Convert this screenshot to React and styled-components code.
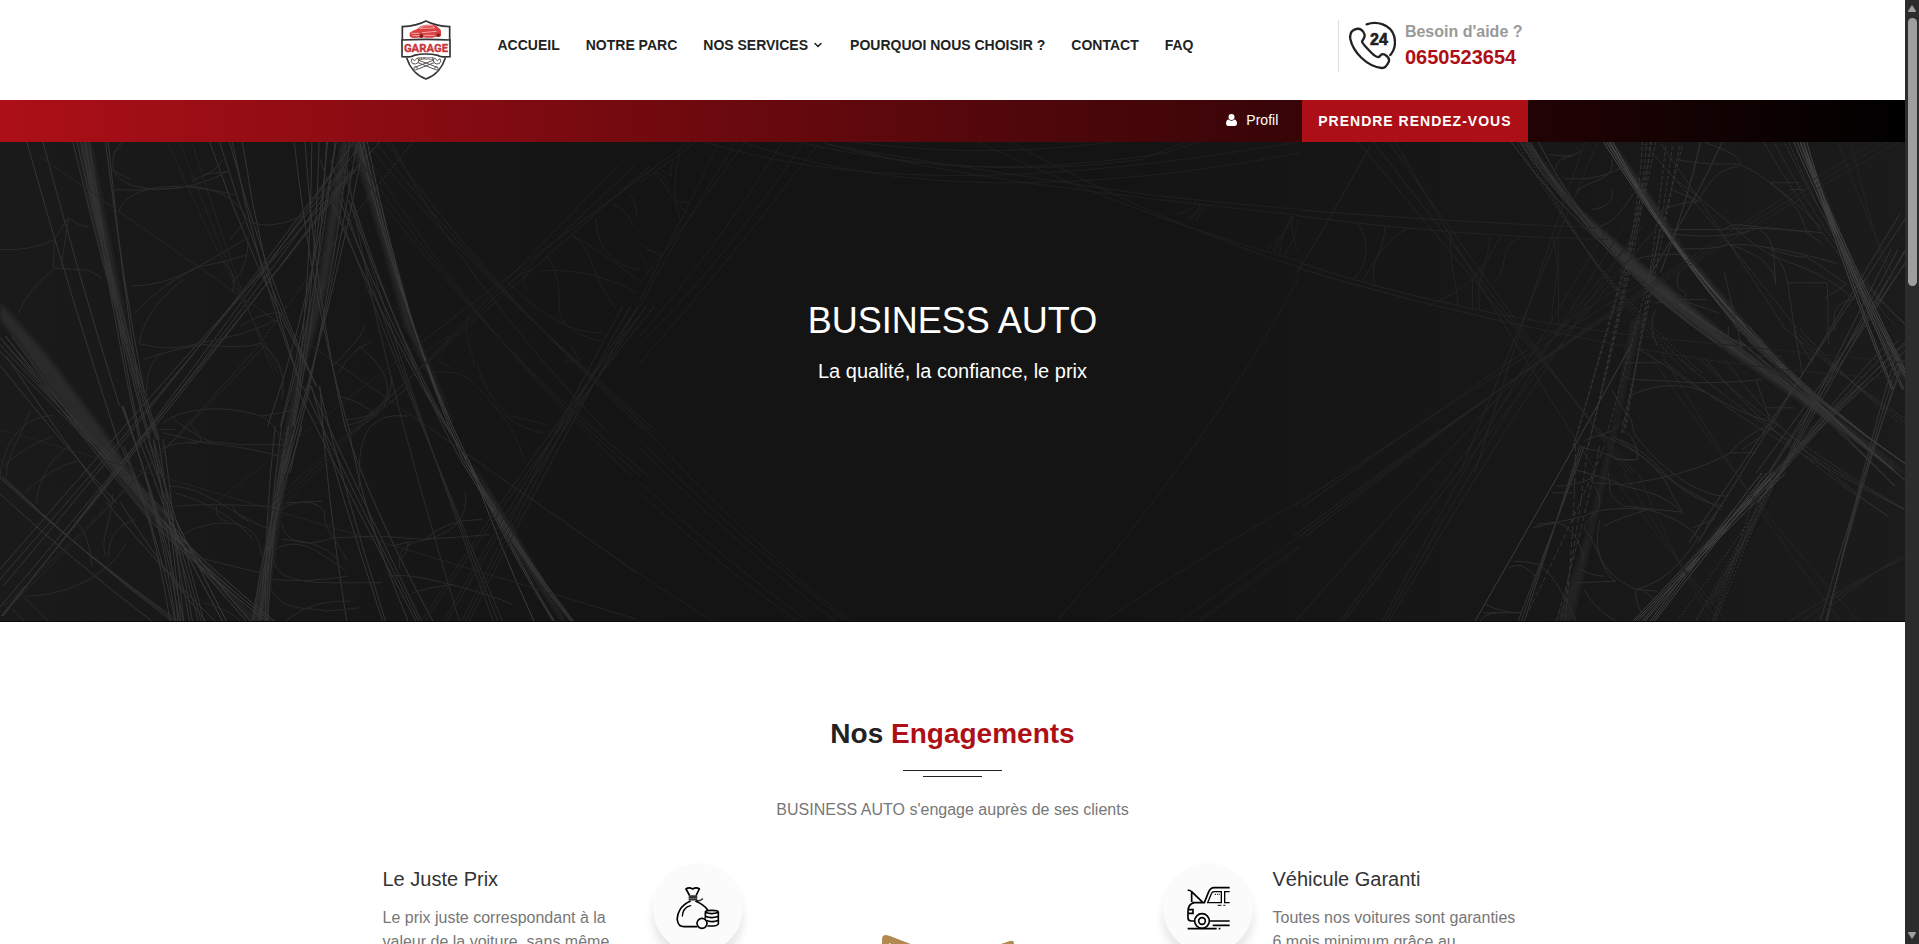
import React from 'react'
import styled, { createGlobalStyle, ThemeProvider } from 'styled-components'
import { FiChevronDown } from 'react-icons/fi'

const theme = {
  colors: {
    red: '#ad0f17',
    dark: '#222222',
    title: '#333333',
    text: '#777777',
    muted: '#999999',
    line: '#dddddd',
    hero: '#141414',
    gold: '#b18a50',
  },
}

const GlobalStyle = createGlobalStyle`
  * {
    box-sizing: border-box;
    margin: 0;
    padding: 0;
  }

  body {
    font-family: "Liberation Sans", Arial, sans-serif;
    font-size: 16px;
    line-height: 24px;
    color: ${theme.colors.text};
    background: #fff;
  }

  a {
    color: inherit;
    text-decoration: none;
  }
`

const Window = styled.div`
  display: flex;
  height: 100vh;
  overflow: hidden;
`

const Page = styled.div`
  flex: 1;
  min-width: 0;
`

const Scrollbar = styled.div`
  width: 14px;
  padding: 5px 2px;
  display: flex;
  flex-direction: column;
  align-items: center;
  background: #2c2c2c;
`

const Thumb = styled.div`
  width: 9px;
  height: 268px;
  margin: 6px 0 auto;
  border-radius: 5px;
  background: #9f9f9f;
`

const Container = styled.div`
  max-width: 1140px;
  margin: 0 auto;
`

const Header = styled.header`
  padding: 20px 0;
  background: #fff;

  ${Container} {
    display: flex;
    align-items: flex-start;
    padding-left: 18px;
  }
`

const LogoLink = styled.a`
  width: 50px;
  height: 60px;

  svg {
    display: block;
  }
`

const NavList = styled.ul`
  display: flex;
  gap: 26px;
  margin-left: 47px;
  list-style-type: none;
`

const NavLink = styled.a`
  display: flex;
  align-items: center;
  gap: 4px;
  font-size: 14px;
  font-weight: bold;
  line-height: 50px;
  text-transform: uppercase;
  white-space: nowrap;
  color: ${({ theme }) => theme.colors.dark};

  svg {
    stroke-width: 3;
  }
`

const Help = styled.div`
  display: flex;
  gap: 9px;
  height: 52px;
  margin-left: auto;
  padding-left: 10px;
  border-left: 1px solid ${({ theme }) => theme.colors.line};
`

const HelpText = styled.div`
  font-weight: bold;
  white-space: nowrap;
  color: ${({ theme }) => theme.colors.muted};

  a {
    display: block;
    font-size: 20px;
    line-height: 26px;
    color: ${({ theme }) => theme.colors.red};
  }
`

const TopBar = styled.div`
  background: linear-gradient(to right, ${({ theme }) => theme.colors.red}, #000);

  ${Container} {
    display: flex;
    justify-content: flex-end;
    gap: 24px;
    max-width: 1150px;
  }
`

const ProfileLink = styled.a`
  display: flex;
  align-items: center;
  gap: 9px;
  font-size: 14px;
  line-height: 40px;
  height: 40px;
  color: #fff;
`

const BookButton = styled.button`
  height: 42px;
  padding: 0 16px;
  border: none;
  font-family: inherit;
  font-size: 14px;
  font-weight: bold;
  letter-spacing: 1px;
  text-transform: uppercase;
  color: #fff;
  background: ${({ theme }) => theme.colors.red};
  cursor: pointer;
`

const HeroSection = styled.section`
  position: relative;
  padding: 155px 0 236px;
  overflow: hidden;
  text-align: center;
  color: #fff;
  background: linear-gradient(to right, #1a1a1a, ${({ theme }) => theme.colors.hero} 35%, ${({ theme }) => theme.colors.hero} 60%, #1b1b1b);
  border-bottom: 1px solid #100a0e;
`

const WebDrawing = styled.svg`
  position: absolute;
  inset: 0;
  width: 100%;
  height: 100%;

  path {
    vector-effect: non-scaling-stroke;
  }
`

const HeroContent = styled.div`
  position: relative;

  h1 {
    font-size: 36px;
    font-weight: normal;
    line-height: 48px;
  }

  p {
    margin-top: 12px;
    font-size: 20px;
    line-height: 28px;
  }
`

const Engagements = styled.section`
  padding-top: 92px;
`

const SectionTitle = styled.h2`
  font-size: 28px;
  line-height: 40px;
  text-align: center;
  color: ${({ theme }) => theme.colors.dark};

  span {
    color: ${({ theme }) => theme.colors.red};
  }
`

const Divider = styled.div`
  display: flex;
  flex-direction: column;
  align-items: center;
  gap: 5px;
  margin: 16px 0 21px;

  &::before,
  &::after {
    content: "";
    width: 99px;
    height: 1px;
    background: ${({ theme }) => theme.colors.dark};
  }

  &::after {
    width: 59px;
  }
`

const SectionText = styled.p`
  text-align: center;
`

const Columns = styled.div`
  display: grid;
  grid-template-columns: repeat(3, 1fr);
  gap: 30px;
  margin-top: 41px;
`

const Feature = styled.article`
  display: flex;
  flex-direction: ${({ $reverse }) => ($reverse ? 'row-reverse' : 'row')};
  justify-content: space-between;
  align-items: flex-start;
  gap: 20px;

  > div {
    flex: 1;
  }

  h3 {
    font-size: 20px;
    font-weight: normal;
    line-height: 32px;
    margin-bottom: 11px;
    color: ${({ theme }) => theme.colors.title};
  }
`

const IconCircle = styled.span`
  display: flex;
  align-items: center;
  justify-content: center;
  width: 90px;
  height: 90px;
  border-radius: 50%;
  background: #fbfbfb;
  box-shadow: 0 10px 10px rgba(0, 0, 0, 0.1);
`

const CenterArt = styled.svg`
  display: block;
  width: 140px;
  height: 60px;
  margin: 71px auto 0 109px;
`

const Logo = () => (
  <svg width="50" height="60" viewBox="3 0 150 180" role="img" aria-label="Garage service">
    <path d="M7 62V20Q50 18 78 3Q106 18 149 20V62" fill="#fff" stroke="#333" strokeWidth="5" />
    <path d="M20 114C28 140 48 166 78 177C108 166 128 140 136 114" fill="#fff" stroke="#333" strokeWidth="5" />
    <path d="M29 38Q40 30 52 27Q62 15 78 14L100 14Q112 16 116 24Q124 28 123 38V48Q118 53 108 50Q90 56 70 52L44 54Q32 54 29 48Z" fill="#d9403f" />
    <path d="M58 25Q66 17 80 17H98L104 24ZM34 40H58M66 38L110 34M38 47H60M70 46H104" fill="none" stroke="#f5c1bd" strokeWidth="2.5" />
    <circle cx="64" cy="48" r="6" fill="#7c2020" />
    <circle cx="115" cy="45" r="5" fill="#7c2020" />
    <path d="M6 60Q78 56 150 60V110Q120 112 114 106Q78 98 42 106Q36 112 6 110Z" fill="#fff" stroke="#333" strokeWidth="5" />
    <text x="78" y="97" textAnchor="middle" fill="#c9373a" stroke="#c9373a" strokeWidth="1" fontFamily="Roboto, 'Liberation Sans', sans-serif" fontWeight="bold" fontSize="34">GARAGE</text>
    <text x="78" y="119" textAnchor="middle" fill="#333" fontFamily="'Liberation Sans', sans-serif" fontWeight="bold" fontSize="11">SERVICE</text>
    <g fill="none" stroke="#555" strokeWidth="3">
      <path d="M36 116Q30 124 38 131Q48 134 54 128L104 148M54 120L112 142M36 116L44 122L52 114Q60 120 54 128" />
      <path d="M120 116Q126 124 118 131Q108 134 102 128L52 148M102 120L44 142M120 116L112 122L104 114Q96 120 102 128" />
      <circle cx="47" cy="145" r="5" />
      <circle cx="109" cy="145" r="5" />
    </g>
  </svg>
)

const PhoneIcon = () => (
  <svg width="47" height="50" viewBox="42 29 141 150" fill="none" stroke="#222" strokeWidth="7" strokeLinecap="round" strokeLinejoin="round">
    <path d="M95 42C125 31 166 42 177 76C183 98 178 120 166 134" />
    <path d="M60 57C49 61 44 72 46 86C54 125 95 168 140 173C150 174 156 166 161 155C166 144 158 138 150 133C140 129 138 133 133 139C128 142 120 138 110 128C98 116 84 100 81 94C82 88 90 84 89 74C87 63 76 51 60 57Z" />
    <text x="105" y="104" fill="#222" strokeWidth="2" fontFamily="'Liberation Sans', sans-serif" fontWeight="bold" fontSize="48">24</text>
  </svg>
)

const UserIcon = () => (
  <svg width="11" height="12" viewBox="0 0 11 12" fill="#fff">
    <circle cx="5.5" cy="3" r="3" />
    <path d="M0 9.6C0 7 1 5.5 2.7 5.4Q5.5 8 8.3 5.4C10 5.5 11 7 11 9.6Q11 12 9 12H2Q0 12 0 9.6Z" />
  </svg>
)

const MoneyBagIcon = () => (
  <svg width="44" height="44" viewBox="948 138 132 132" fill="none" stroke="#000" strokeWidth="5" strokeLinejoin="round" strokeLinecap="round">
    <path d="M988 165L978 147Q987 140 998 147Q1009 140 1018 147L1009 165" />
    <path d="M988 168H1010M988 173H1010M988 179H1010M1010 182Q1020 184 1027 177" stroke="#333" />
    <path d="M990 184C962 196 950 222 952 240C954 256 962 260 972 260H1010" />
    <path d="M1008 184C1022 190 1036 200 1043 210" />
    <path d="M967 228C968 212 978 200 992 197" strokeWidth="4" />
    <circle cx="1026" cy="250" r="15" />
    <path d="M1036 234V216Q1037 211 1055 211Q1074 211 1075 216V252Q1072 259 1044 258M1036 217Q1055 225 1075 217M1036 229Q1055 237 1075 229M1042 242Q1060 248 1075 241" />
  </svg>
)

const CarIcon = () => (
  <svg width="44" height="44" viewBox="136 138 132 132" fill="none" stroke="#000" strokeWidth="5">
    <path d="M141 151Q149 150 153 155L187 188M153 155V186M156 188H191L203 158Q208 143 221 143H267" />
    <path d="M160 188Q142 192 142 215V234Q142 243 152 243H160M142 209H157V220H142" />
    <path d="M201 188L212 161Q214 155 221 155H242V188ZM267 155H252V188H267" strokeWidth="4" />
    <path d="M222 163H238" strokeWidth="3" strokeDasharray="4 3" />
    <path d="M231 196H242M248 196H254" strokeWidth="3" />
    <circle cx="184" cy="243" r="22" />
    <circle cx="184" cy="243" r="10" />
    <path d="M208 243H267M216 256H267M141 266H228M234 266H239" />
  </svg>
)

// draws n threads that follow one curve, each a bit further from it
// p: start x, y, control x, y, end x, y
const Strands = ({ p, n = 5, a = 30, b = 30, color = '#343434', dash }) => {
  const lines = []
  for (let i = 0; i < n; i++) {
    const t = n > 1 ? i / (n - 1) - 0.5 : 0
    const w = ((i * 7) % 5) / 5 - 0.4
    const s = (t + w * 0.25) * a
    const e = (w * 0.6 - t) * b
    lines.push(`M${p[0] + s} ${p[1]}Q${p[2] + (s + e) / 2} ${p[3]} ${p[4] + e} ${p[5]}`)
  }
  return <path d={lines.join('')} stroke={color} strokeDasharray={dash} />
}

const leftThreads = [
  { p: [68, 6, 180, 480, 300, 920], n: 1 },
  { p: [300, 920, 380, 1140, 425, 1446], n: 2, a: 6, b: 16 },
  { p: [108, 6, 200, 420, 300, 800], n: 1 },
  { p: [300, 800, 400, 1140, 440, 1446], n: 3, a: 4, b: 36 },
  { p: [200, 6, 290, 560, 370, 900], n: 7, a: 36, b: 50 },
  { p: [370, 900, 420, 1120, 468, 1446], n: 8, a: 50, b: 70 },
  { p: [262, 6, 300, 420, 350, 760], n: 2, a: 6, b: 14 },
  { p: [0, 590, 200, 880, 400, 1140], n: 7, a: 60, b: 60 },
  { p: [400, 1140, 520, 1320, 620, 1446], n: 7, a: 60, b: 130, color: '#3c3c3c' },
  { p: [0, 650, 150, 900, 280, 1090], n: 2, a: 30, b: 20 },
  { p: [280, 1090, 400, 1290, 520, 1446], n: 2, a: 30, b: 30 },
  { p: [935, 6, 520, 560, 0, 1300], n: 1 },
  { p: [880, 6, 520, 600, 0, 1340], n: 2, a: 20, b: 30 },
  { p: [850, 90, 520, 650, 0, 1430], n: 4, a: 50, b: 30 },
  { p: [640, 620, 400, 950, 20, 1400], n: 2, a: 14, b: 20, color: '#272727' },
  { p: [1016, 6, 860, 240, 640, 620], n: 1, dash: '2 2' },
  { p: [0, 1010, 200, 1240, 430, 1446], n: 3, a: 10, b: 30 },
  { p: [0, 1060, 180, 1260, 380, 1446], n: 1 },
  { p: [555, 6, 630, 380, 760, 740], n: 5, a: 70, b: 60 },
  { p: [760, 740, 850, 1060, 975, 1446], n: 6, a: 60, b: 170 },
  { p: [735, 6, 770, 480, 850, 860], n: 2, a: 24, b: 10 },
  { p: [850, 860, 900, 1100, 1040, 1446], n: 2, a: 8, b: 80 },
  { p: [800, 6, 770, 500, 700, 860], n: 6, a: 60, b: 60 },
  { p: [710, 860, 660, 1150, 640, 1446], n: 7, a: 60, b: 40 },
  { p: [875, 6, 810, 520, 700, 1000], n: 3, a: 30, b: 40 },
  { p: [820, 60, 930, 560, 1200, 1446], n: 4, a: 60, b: 120, color: '#2b2b2b' },
  { p: [840, 180, 980, 640, 1140, 960], n: 4, a: 50, b: 20 },
  { p: [890, 6, 990, 560, 1140, 960], n: 3, a: 16, b: 26, color: '#3c3c3c' },
  { p: [1140, 960, 1260, 1240, 1375, 1446], n: 6, a: 20, b: 90, color: '#3c3c3c' },
  { p: [930, 6, 1150, 400, 1568, 870], n: 4, a: 60, b: 140, color: '#222' },
  { p: [880, 60, 1180, 600, 1568, 1010], n: 3, a: 40, b: 80, color: '#202020' },
  { p: [1568, 80, 1180, 500, 640, 1100], n: 4, a: 90, b: 200, color: '#212121' },
  { p: [1568, 500, 1350, 900, 1100, 1446], n: 7, a: 70, b: 120, color: '#232323' },
  { p: [440, 6, 560, 400, 680, 700], n: 3, a: 50, b: 40, color: '#232323' },
  { p: [100, 50, 700, 560, 1568, 1300], n: 1, color: '#262626' },
  { p: [0, 870, 600, 1080, 1568, 1440], n: 1, color: '#232323' },
]

const leftWebs = `M0 330Q80 335 133 300L168 235Q190 258 217 263M133 300Q132 340 131 385M168 235L150 380M45 520Q70 450 135 385Q170 390 215 392L250 415
M300 6C260 60 270 120 330 140C430 170 520 120 560 95M280 150C360 155 440 145 460 140C540 145 590 190 605 240C640 270 700 255 745 225
M290 220C300 170 350 140 440 140M270 90L320 120M275 40L300 20M500 105L560 95M460 142Q520 150 575 165M545 60Q540 90 470 125
M320 440Q400 440 480 385Q560 330 608 295M330 520Q400 430 490 380Q550 370 605 345M340 610Q360 500 450 420M550 370Q580 400 570 460M565 300Q590 260 600 245M608 295Q610 380 570 430
M340 612Q420 640 490 610Q600 590 680 540M350 660Q420 630 500 615Q600 630 640 610M640 615C690 650 700 720 690 780M360 770C355 690 380 650 400 640M590 560Q640 520 680 520
M400 850C440 810 540 790 640 830L730 810M460 840C480 880 520 920 460 910M390 930C440 900 520 905 580 915H700M640 830C680 860 680 890 700 915M400 880L500 910Q620 925 700 955M420 830Q450 870 520 910M380 870H430
M415 1040C500 1040 560 1120 660 1170M430 1100C520 1090 600 1100 680 1100M530 1100Q525 1140 560 1146M440 1190C520 1130 640 1130 640 1250M430 1060Q560 1110 620 1200M570 1100Q580 1130 610 1146M440 1240Q600 1290 640 1300
M690 1110C720 1080 780 1080 795 1120C790 1160 820 1200 850 1260M690 1150C700 1220 760 1220 815 1195L920 1190M675 1230C740 1180 800 1260 845 1290M670 1260C680 1330 760 1330 850 1330H935M660 1320Q760 1330 850 1310M690 1200Q780 1200 830 1260M700 1090L790 1085
M895 560C880 600 840 650 815 680M905 610Q860 630 830 700M880 620C940 680 950 720 950 760C930 830 880 840 845 840M825 770C870 780 900 800 920 830M840 860C900 850 960 790 1000 740M1000 830C920 820 880 860 880 1000V1050M850 890L930 820M960 710Q960 760 940 800
M1140 1060C1150 1150 1090 1190 1040 1200Q980 1195 930 1190M980 1290C970 1220 1000 1200 1100 1195Q1160 1190 1200 1185M950 1310C1010 1300 1080 1330 1120 1340C1180 1360 1230 1380 1255 1395M1010 1360Q1060 1340 1110 1335M960 1220L1010 1205M980 1260Q1000 1240 1000 1210M1180 1140Q1090 1140 1040 1200
M0 1010C10 900 60 830 130 828M75 810C50 900 20 930 15 1010M130 890Q60 920 10 980M60 1060Q130 980 190 965M90 1095C90 1020 130 950 170 920M275 1060C280 1130 240 1200 260 1250M330 1140C260 1170 270 1230 265 1250M60 1370C150 1370 260 1320 310 1210M30 1410L60 1446M55 1370L120 1446M225 1280Q220 1180 180 1140
M500 1390Q560 1410 590 1446M660 1340C690 1420 740 1400 800 1415Q850 1410 880 1405M700 1446Q760 1380 860 1385`

const leftFaintWebs = `M1040 640Q1080 600 1100 590C1080 680 1050 650 1110 690M1145 530C1130 600 1170 660 1160 680M1060 700Q1120 690 1150 720C1220 800 1240 860 1330 880M1170 680Q1190 770 1250 830L1340 855M1245 430Q1280 400 1300 390C1260 440 1300 440 1290 450M1340 350C1400 460 1340 520 1400 570Q1440 600 1480 605M1245 430Q1320 520 1370 545Q1410 580 1480 580M1320 395C1420 385 1500 420 1560 460M1400 290C1460 330 1440 400 1510 510M1405 290Q1480 340 1560 420M1460 235C1460 320 1500 380 1568 390M1500 195Q1540 210 1550 260M1540 160Q1560 190 1560 230M1210 800Q1270 880 1285 970M1380 665H1420L1400 620`

const rightThreads = [
  { p: [570, 6, 760, 370, 1100, 620], n: 5, a: 60, b: 90, color: '#363636' },
  { p: [560, 6, 740, 420, 1000, 700], n: 3, a: 20, b: 70, dash: '2 2' },
  { p: [1000, 660, 1200, 900, 1533, 1130], n: 5, a: 140, b: 120, dash: '2 1' },
  { p: [1100, 600, 1290, 780, 1533, 1040], n: 5, a: 60, b: 70 },
  { p: [780, 6, 940, 330, 1120, 560], n: 5, a: 20, b: 30, color: '#464646' },
  { p: [1120, 560, 1300, 790, 1533, 990], n: 5, a: 30, b: 80, color: '#3c3c3c' },
  { p: [890, 6, 1050, 240, 1250, 570], n: 2, a: 40, b: 40, dash: '2 1' },
  { p: [1250, 570, 1380, 720, 1533, 850], n: 3, a: 30, b: 60, dash: '2 1' },
  { p: [1268, 6, 1370, 330, 1533, 750], n: 7, a: 30, b: 60, color: '#424242' },
  { p: [1210, 6, 1380, 400, 1533, 560], n: 4, a: 60, b: 40, dash: '2 1' },
  { p: [885, 6, 860, 280, 715, 920], n: 5, a: 30, b: 60, dash: '4 2' },
  { p: [950, 20, 900, 380, 810, 880], n: 4, a: 40, b: 50, dash: '4 2' },
  { p: [715, 920, 640, 1180, 560, 1446], n: 3, a: 10, b: 30 },
  { p: [740, 920, 700, 1180, 640, 1446], n: 4, a: 70, b: 120, dash: '5 3' },
  { p: [840, 620, 640, 1050, 450, 1446], n: 1, color: '#3c3c3c' },
  { p: [1533, 330, 1330, 740, 1200, 1000], n: 6, a: 60, b: 60 },
  { p: [1533, 600, 1300, 860, 1150, 1090], n: 5, a: 60, b: 40 },
  { p: [1200, 1000, 1040, 1210, 870, 1446], n: 8, a: 50, b: 60, color: '#404040' },
  { p: [1200, 1000, 1110, 1240, 1020, 1446], n: 6, a: 50, b: 90, dash: '2 2' },
  { p: [1533, 220, 1280, 700, 1000, 1210], n: 2, a: 20, b: 30 },
  { p: [1520, 660, 1420, 1020, 1330, 1446], n: 4, a: 24, b: 20 },
  { p: [1045, 6, 990, 200, 905, 400], n: 2, a: 50, b: 30 },
  { p: [200, 6, 460, 430, 820, 1000], n: 4, a: 90, b: 110, color: '#242424' },
  { p: [820, 1000, 920, 1200, 1060, 1446], n: 3, a: 60, b: 80, color: '#232323' },
  { p: [900, 640, 1150, 1100, 1400, 1446], n: 2, a: 30, b: 60, color: '#242424' },
  { p: [1490, 6, 760, 500, 0, 1190], n: 3, a: 50, b: 60, color: '#242424' },
  { p: [860, 420, 420, 760, 0, 1100], n: 2, a: 40, b: 30, color: '#222' },
  { p: [860, 260, 480, 860, 150, 1446], n: 6, a: 130, b: 220, color: '#232323' },
  { p: [740, 6, 560, 560, 430, 1000], n: 2, a: 30, b: 50, color: '#242424' },
  { p: [180, 20, 80, 240, 0, 400], n: 1, color: '#242424' },
  { p: [1380, 6, 1430, 200, 1500, 420], n: 2, a: 30, b: 20, color: '#242424' },
  { p: [1533, 1250, 1400, 1330, 1270, 1446], n: 3, a: 20, b: 120, color: '#262626' },
]

const rightWebs = `M0 212Q360 245 750 265M0 230Q380 290 780 300M0 370Q380 520 860 590L1533 670M0 388Q400 530 870 630Q1200 700 1533 720
M145 250C180 310 170 370 140 415M215 260C215 330 180 380 160 420M275 265C180 330 180 400 190 430M380 280C380 400 400 440 400 500M480 290C480 370 450 430 350 485M510 290C450 400 450 430 455 510M560 295C500 310 530 400 490 430M640 300C670 400 630 480 640 545M437 420V505M655 300V550`

const rightBrightWebs = `M630 45Q660 50 690 50M700 25C740 50 640 40 650 90M670 118H720Q780 110 820 80M700 160C720 120 800 130 790 60M740 210Q800 200 790 150M760 260C820 240 830 160 870 140
M955 60C1040 80 1070 70 1115 75C1180 110 1250 180 1320 265M1020 6C1100 40 1120 60 1115 75M950 120C1060 210 1140 320 1200 350S1330 400 1405 480M1010 180C1040 120 1060 90 1110 80M940 150L1010 185Q950 190 915 215M1190 130H1265M1240 150H1280M1190 130C1270 200 1270 240 1285 280L1320 310
M930 270H1070Q1160 260 1325 280M1070 270L1100 255Q1200 265 1290 278M950 285Q1100 300 1160 265Q1200 300 1200 350L1205 435M965 328Q1060 330 1085 315Q1180 310 1360 372M1085 315C1160 340 1200 380 1205 430M1200 345Q1230 380 1235 430H1335M1170 320C1220 340 1270 360 1280 350Q1320 380 1385 435M1235 430Q1250 560 1272 700M1335 430C1340 520 1335 600 1340 615M1385 435L1330 475M1400 480Q1340 490 1355 575M1075 400C1090 480 1110 560 1120 640M1250 575Q1280 640 1300 670
M850 360Q900 340 965 345M960 400C940 470 990 440 975 485L1060 520M900 490Q960 480 980 500M950 480H1030M900 510Q880 560 905 620M1160 650H1220M1085 560V600H1060
M820 670H915M815 700Q820 720 850 720Q940 725 1000 730Q1100 730 1170 720M835 770C900 730 980 730 1030 760C1100 810 1160 840 1210 850M860 630C960 700 990 740 1030 760M790 750C820 830 840 810 845 880C900 970 1000 1070 1080 1070M1155 720L1190 840M1180 805H1250M1200 850Q1120 890 1090 940H1155M1090 940C1000 1000 900 1020 820 1035L740 1030M1120 930L1210 855M820 840C790 890 760 880 720 905
M715 925Q770 935 800 960H850M790 890C900 960 960 1080 1070 1100M760 885C900 950 930 1030 940 1060L970 1120M810 900Q870 930 930 1010C980 1060 1020 1070 1065 1110M690 990Q770 1010 820 1040Q920 1060 965 1115M650 1040Q700 1040 750 1010M640 1060H700M780 1000C790 1050 770 1060 820 1100Q900 1110 970 1118M745 1040C800 1130 680 1140 735 1190M600 1155Q660 1150 720 1130Q760 1100 880 1110C940 1130 990 1160 1010 1200M590 1165Q620 1155 650 1150C690 1160 710 1210 720 1260M770 1160Q800 1140 880 1110M760 1140C740 1230 760 1300 850 1350L905 1355M735 1190C760 1240 770 1310 800 1325M700 1330L800 1325M850 1350C920 1330 970 1270 1010 1190M850 1350Q850 1400 870 1425M870 1355L900 1380M540 1265Q570 1265 605 1275C650 1310 680 1400 700 1446M530 1285Q560 1260 600 1315M710 1290Q740 1310 770 1310M470 1395Q510 1420 560 1420H465M455 1446Q470 1420 500 1420M720 1350Q740 1400 800 1446M1025 1180Q1030 1150 1060 1110M995 1165L1050 1140M830 880Q860 920 855 960Q800 970 785 940`

const centerWebs = `M150 6C420 110 820 170 1568 6M240 6C500 120 900 200 1568 40M370 6C620 80 900 110 1190 60L1300 6M430 6C650 100 950 100 1250 40L1330 6M440 15C650 60 860 100 1040 135S1300 180 1568 210M500 25C700 100 1000 150 1568 228M800 6C1060 160 1300 270 1568 365M880 6C1100 160 1320 280 1568 385M500 6C700 40 900 45 1130 6M0 115L120 6M0 130L135 6
M190 6Q100 240 0 480M230 6Q100 260 0 500M340 6Q180 330 0 590M390 6Q180 400 0 610M425 10Q230 340 0 670M250 6Q120 240 0 430M95 40C85 80 80 150 85 185L120 190M80 60Q70 100 75 110M30 100C70 130 60 180 125 230M50 90L75 110M35 100Q60 100 65 140M85 185L95 240M0 310Q40 350 50 350M15 330L52 342M0 340L20 395
M0 850Q230 1180 500 1446M0 905Q240 1200 490 1446M0 925Q240 1230 465 1446M0 1030Q200 1260 400 1446M0 1060Q200 1290 375 1446M0 1305Q90 1380 175 1446
M1568 410Q1360 900 990 1446M1568 1085Q1320 1260 1100 1446M1568 1190Q1420 1320 1280 1446M1568 1220Q1450 1320 1325 1446M1568 1226L1330 1446
M1275 225Q1320 210 1320 185M1295 240Q1330 220 1330 190M1305 245L1342 190M1320 245Q1330 210 1360 190M1488 330Q1540 280 1550 230M1505 338L1548 230M1520 345Q1520 290 1550 230M1530 345Q1560 300 1565 240M1550 230Q1545 300 1568 345`

// soft wide strands behind the threads
const leftGlow = `M195 6H220L250 200L370 940L350 820L220 200ZM0 490L110 640L250 870L400 1140L630 1446H620L370 1130L160 810L40 600L0 540ZM838 6H855L800 440L735 720L700 1000L645 1446H622L690 950L725 720L785 400ZM862 6H888L940 250L1010 560L1150 960L1260 1180L1385 1446H1378L1225 1160L1110 850L995 560L935 300Z`
const rightGlow = `M560 6H575L700 200L860 370L1120 630L1340 820L1533 1000V1005L1300 810L1090 640L900 470L760 300L650 150ZM775 6H788L880 160L970 330L1140 570L1350 830L1320 800L1105 560L955 320L855 150ZM1266 6H1272L1360 260L1450 520L1533 690V730L1410 440L1345 260Z`
const rightFaintGlow = `M840 540L865 540L825 740L770 1040L690 1446H650L725 1190L795 860ZM1533 620L1350 830L1190 1030L1010 1250L870 1446H860L1045 1180L1210 980L1340 810L1533 640ZM1190 1040L1025 1420L1060 1370L1200 1040Z`

const HeroBackground = () => (
  <WebDrawing viewBox="0 0 1905 480" preserveAspectRatio="xMidYMid slice" fill="none" aria-hidden="true">
    <defs>
      <filter id="soft">
        <feGaussianBlur stdDeviation="6" />
      </filter>
    </defs>
    <g transform="translate(0 -2) scale(.4082 .3333)">
      <path d={leftGlow} fill="#2c2c2c" filter="url(#soft)" />
      {leftThreads.map((thread, i) => <Strands key={i} {...thread} />)}
      <path d={leftWebs} stroke="#2a2a2a" />
      <path d={leftFaintWebs} stroke="#202020" />
    </g>
    <g transform="translate(640 -2) scale(.4209 .3333)">
      <path d={centerWebs} stroke="#1f1f1f" />
    </g>
    <g transform="translate(1300 -2) scale(.3948 .3333)">
      <path d={rightFaintGlow} fill="#242424" filter="url(#soft)" />
      <path d={rightGlow} fill="#2e2e2e" filter="url(#soft)" />
      {rightThreads.map((thread, i) => <Strands key={i} {...thread} />)}
      <path d={rightWebs} stroke="#232323" />
      <path d={rightBrightWebs} stroke="#2d2d2d" />
    </g>
  </WebDrawing>
)

const navItems = ['Accueil', 'Notre parc', 'Nos services', 'Pourquoi nous choisir ?', 'Contact', 'FAQ']

const App = () => {
  return (
    <ThemeProvider theme={theme}>
      <GlobalStyle />
      <Window>
        <Page>
          <Header>
            <Container>
              <LogoLink href="#"><Logo /></LogoLink>
              <nav>
                <NavList>
                  {navItems.map((item) => (
                    <li key={item}>
                      <NavLink href="#">
                        {item}
                        {item === 'Nos services' && <FiChevronDown size={12} />}
                      </NavLink>
                    </li>
                  ))}
                </NavList>
              </nav>
              <Help>
                <PhoneIcon />
                <HelpText>
                  Besoin d'aide ?
                  <a href="tel:0650523654">0650523654</a>
                </HelpText>
              </Help>
            </Container>
          </Header>

          <TopBar>
            <Container>
              <ProfileLink href="#"><UserIcon /> Profil</ProfileLink>
              <BookButton type="button">Prendre rendez-vous</BookButton>
            </Container>
          </TopBar>

          <HeroSection>
            <HeroBackground />
            <HeroContent>
              <h1>BUSINESS AUTO</h1>
              <p>La qualité, la confiance, le prix</p>
            </HeroContent>
          </HeroSection>

          <Engagements>
            <Container>
              <SectionTitle>Nos <span>Engagements</span></SectionTitle>
              <Divider />
              <SectionText>BUSINESS AUTO s'engage auprès de ses clients</SectionText>
              <Columns>
                <Feature>
                  <div>
                    <h3>Le Juste Prix</h3>
                    <p>Le prix juste correspondant à la valeur de la voiture, sans même</p>
                  </div>
                  <IconCircle><MoneyBagIcon /></IconCircle>
                </Feature>
                <CenterArt viewBox="0 0 140 60">
                  <path d="M0 5Q0 1 4 1L8 2L70 26L128 7Q132 6 132 10V60H0Z" fill={theme.colors.gold} />
                  <path d="M7 9L66 34V60H7Z" fill="#fff" />
                </CenterArt>
                <Feature $reverse>
                  <div>
                    <h3>Véhicule Garanti</h3>
                    <p>Toutes nos voitures sont garanties 6 mois minimum grâce au</p>
                  </div>
                  <IconCircle><CarIcon /></IconCircle>
                </Feature>
              </Columns>
            </Container>
          </Engagements>
        </Page>

        <Scrollbar aria-hidden="true">
          <svg width="10" height="7" viewBox="0 0 10 7"><path d="M5 0L9 6Q9 7 8 7H2Q1 7 1 6Z" fill="#9f9f9f" /></svg>
          <Thumb />
          <svg width="10" height="7" viewBox="0 0 10 7"><path d="M5 7L9 1Q9 0 8 0H2Q1 0 1 1Z" fill="#9f9f9f" /></svg>
        </Scrollbar>
      </Window>
    </ThemeProvider>
  )
}

export default App
